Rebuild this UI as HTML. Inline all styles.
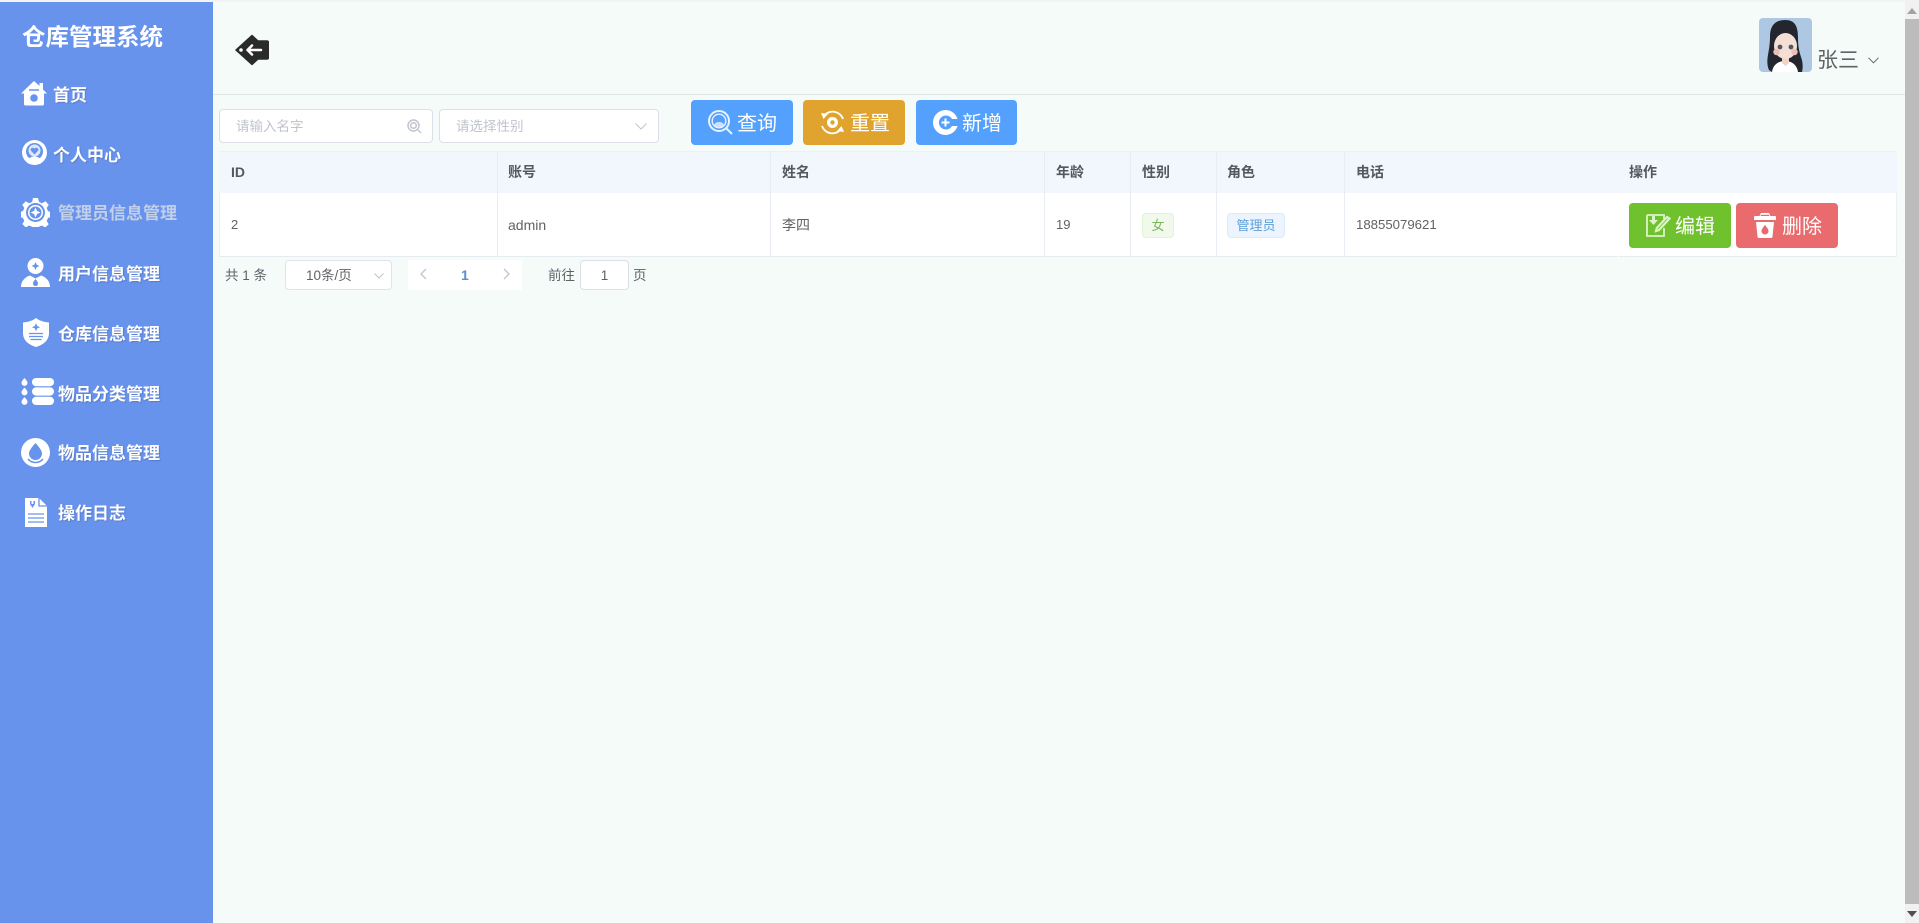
<!DOCTYPE html>
<html lang="zh">
<head>
<meta charset="utf-8">
<title>仓库管理系统</title>
<style>
*{box-sizing:border-box;margin:0;padding:0}
html,body{width:1919px;height:923px;overflow:hidden;background:#f5fbf9}
body{position:relative;font-family:"Liberation Sans","Noto Sans CJK SC",sans-serif;color:#606266}
.a{position:absolute;white-space:nowrap}
.side{left:0;top:2px;width:213px;height:921px;background:#6893ec}
.m{color:#fff;font-weight:700;font-size:17px;line-height:24px;text-shadow:1px 1px 1px rgba(60,80,140,.35)}
.ic{position:absolute;display:block}
.box{background:#fff;border:1px solid #dcdfe6;border-radius:4px}
.btn{border-radius:4px;color:#fff;font-size:20px;line-height:49px;height:45px}
.th{font-size:14px;font-weight:700;color:#55585c;line-height:20px;top:162px}
.td{font-size:14px;color:#606266;line-height:20px;top:215px}
.n{font-size:13px}
.vl{width:1px;background:#e8edf3}
</style>
</head>
<body>
<div class="a" style="left:0;top:0;width:1919px;height:2px;background:#f2f4f4"></div>
<div class="a side"></div>
<div class="a" style="left:22px;top:19px;color:#fff;font-size:23.5px;font-weight:700;line-height:36px">仓库管理系统</div>

<svg class="ic" style="left:21px;top:81px" width="26" height="25" viewBox="0 0 26 25"><path fill="#fff" d="M13 0 0 12.500h3V23a1.500 1.500 0 0 0 1.500 1.500h17A1.500 1.500 0 0 0 23 23V12.500h3L22 8.500V2h-3.500v3z"/><circle cx="13" cy="17" r="3.800" fill="#6893ec"/><path d="M8 9h10" stroke="#6893ec" stroke-width="1.500"/></svg>
<div class="a m" style="left:53px;top:84px">首页</div>

<svg class="ic" style="left:22px;top:140px" width="25" height="25" viewBox="0 0 25 25"><circle cx="12.500" cy="12.500" r="12.500" fill="#fff"/><circle cx="12.500" cy="11.500" r="8.500" fill="#6893ec"/><ellipse cx="12.500" cy="10.500" rx="6" ry="6" fill="#dfe8fb"/><path fill="#6893ec" d="M12.500 14.500 8.700 10.500c-.9-2.300 2.500-3.800 3.800-1.800 1.300-2 4.700-.5 3.800 1.800z"/><path fill="#fff" d="M4 21c3-3.500 6-4.500 8.500-4.500s5.500 1 8.500 4.500l-3 3H7z"/></svg>
<div class="a m" style="left:53px;top:144px">个人中心</div>

<svg class="ic" style="left:21px;top:198px" width="29" height="29" viewBox="0 0 29 29"><path fill="#fff" d="M12 0h5l1 4 3 1.300 3.500-2 3.200 3.500-2 3.300 1.300 3 3 .9v5l-3 1-1.300 3 2 3.300-3.500 3.200-3.300-2-3 1.300-.9 3h-5l-.9-3-3-1.300-3.300 2-3.500-3.500 2-3-1.300-3-3-1v-5l3-1 1.300-3-2-3.200 3.500-3.500 3.300 2 3-1.300z"/><circle cx="14.500" cy="14.500" r="9.500" fill="#6893ec"/><circle cx="14.500" cy="14.500" r="7.500" fill="#fff"/><circle cx="14.500" cy="14.500" r="6" fill="#6893ec"/><path fill="#fff" d="m14.500 9.500 1.500 3.500 3.500 1.500-3.500 1.500-1.500 3.500-1.500-3.500-3.500-1.500 3.500-1.500z"/></svg>
<div class="a m" style="left:58px;top:202px;color:#c3cfe8;text-shadow:none">管理员信息管理</div>

<svg class="ic" style="left:21px;top:258px" width="29" height="29" viewBox="0 0 29 29"><circle cx="14.500" cy="8" r="8" fill="#fff"/><path fill="#6893ec" d="m14.500 4 1.200 2.800 2.800 1.200-2.800 1.200-1.200 2.800-1.200-2.800L10.500 8l2.800-1.200z"/><path fill="#fff" d="M0 29c0-6 4-10 9-11.500l5.500 3 5.500-3c5 1.500 9 5.500 9 11.500z"/><path fill="#6893ec" d="M14.500 21c2 2.300 2.500 3.500 2.500 4.600a2.500 2.500 0 0 1-5 0c0-1.100.5-2.300 2.500-4.600z"/></svg>
<div class="a m" style="left:58px;top:263px">用户信息管理</div>

<svg class="ic" style="left:23px;top:318px" width="26" height="29" viewBox="0 0 26 29"><path fill="#fff" d="M13 0c3 2.500 7.500 4 13 4.500V15c0 7-5 11.500-13 14C5 26.500 0 22 0 15V4.500C5.500 4 10 2.500 13 0z"/><path fill="#6893ec" d="m13 5 1.200 3 3 1.200-3 1.200-1.200 3-1.200-3-3-1.200 3-1.200z"/><path stroke="#6893ec" stroke-width="1.300" d="M6 15.500h14M6 18.500h14M7.500 21.500h11"/></svg>
<div class="a m" style="left:58px;top:323px">仓库信息管理</div>

<svg class="ic" style="left:21px;top:378px" width="33" height="27" viewBox="0 0 33 27"><rect x="11" y="0" width="22" height="8.200" rx="4" fill="#fff"/><rect x="11" y="9.400" width="22" height="8.200" rx="4" fill="#fff"/><rect x="11" y="18.800" width="22" height="8.200" rx="4" fill="#fff"/><path fill="#fff" d="M3.500 0C5.500 2.300 6.500 3.600 6.500 4.900a3 3 0 0 1-6 0C.5 3.600 1.500 2.300 3.500 0zM3.500 9.500c2 2.300 3 3.600 3 4.900a3 3 0 0 1-6 0c0-1.300 1-2.600 3-4.900zM3.500 19c2 2.300 3 3.600 3 4.900a3 3 0 0 1-6 0c0-1.300 1-2.600 3-4.900z"/></svg>
<div class="a m" style="left:58px;top:383px">物品分类管理</div>

<svg class="ic" style="left:21px;top:438px" width="29" height="29" viewBox="0 0 29 29"><circle cx="14.500" cy="14.500" r="14.500" fill="#fff"/><path fill="#6893ec" d="M14.500 5c4.500 5 6.500 8 6.500 10.500a6.500 6.500 0 0 1-13 0C8 13 10 10 14.500 5z"/><path fill="none" stroke="#6893ec" stroke-width="1.500" d="M7 21c2 2.500 4.500 3.500 7.500 3.500S20 23.500 22 21"/></svg>
<div class="a m" style="left:58px;top:442px">物品信息管理</div>

<svg class="ic" style="left:25px;top:498px" width="22" height="29" viewBox="0 0 22 29"><path fill="#fff" d="M0 0h14l8 8v21H0z"/><path stroke="#6893ec" stroke-width="1.300" fill="none" d="M3 16h16M3 20h16M3 24h16M14 0v8h8"/><path fill="#6893ec" d="M5 3h1.500v3h2V3H10v3l-2.500 4L5 6z"/></svg>
<div class="a m" style="left:58px;top:502px">操作日志</div>

<!-- header -->
<div class="a" style="left:213px;top:94px;width:1692px;height:1px;background:#dfe7e7"></div>
<svg class="ic" style="left:235px;top:34px" width="34" height="32" viewBox="0 0 34 32"><path fill="#2b2a2a" stroke="#2b2a2a" stroke-width="1.500" stroke-linejoin="round" d="M17 1.500 23 7h9a1.500 1.500 0 0 1 1.500 1.500v15A1.500 1.500 0 0 1 32 25h-9l-6 5.500L1 16z"/><circle cx="6" cy="16" r="1.800" fill="#fff"/><path fill="none" stroke="#fff" stroke-width="2.500" stroke-linecap="round" stroke-linejoin="round" d="M17 11.500 12.500 16l4.500 4.500M13 16h13"/></svg>

<svg class="ic" style="left:1759px;top:18px;border-radius:4px" width="53" height="54" viewBox="0 0 53 54"><rect width="53" height="54" fill="#aec7e2"/><path fill="#23262f" d="M26 2C16 2 11 8 11 18c0 8-1 13-2 19-1 5-1 11 1 15l3 2h4l20-2 2 2h4c1-4 1-10-1-15-2-6-3-11-3-19C39 8 36 2 26 2z"/><path fill="#fff" d="M13 54c1-7 6-11 13-11s12 4 13 11z"/><path fill="#f1d3c6" d="M23 38h7v7l-3.500 3-3.500-3z"/><ellipse cx="26.500" cy="28" rx="11.500" ry="13" fill="#f3dfd6"/><path fill="#23262f" d="M26 10c-3 5-7 8-12 11 0-8 4-14 12-14s12 6 13 14c-5-3-10-6-13-11z"/><circle cx="21" cy="29" r="2.400" fill="#55565c"/><circle cx="32" cy="29" r="2.400" fill="#55565c"/><circle cx="17.500" cy="34" r="3.200" fill="#ecc0b6"/><circle cx="35.500" cy="34" r="3.200" fill="#ecc0b6"/></svg>
<div class="a" style="left:1817px;top:46px;font-size:21px;line-height:30px;color:#606266">张三</div>
<svg class="ic" style="left:1868px;top:57px" width="11" height="7" viewBox="0 0 11 7"><path fill="none" stroke="#606266" d="m.5.800 5 5 5-5"/></svg>

<!-- scrollbar -->
<div class="a" style="left:1905px;top:0;width:14px;height:923px;background:#f1f1f1"></div>
<div class="a" style="left:1905px;top:19px;width:14px;height:885px;background:#bcbcbc"></div>
<svg class="ic" style="left:1907px;top:8px" width="10" height="6" viewBox="0 0 10 6"><path fill="#a3a3a3" d="M5 0l5 6H0z"/></svg>
<svg class="ic" style="left:1907px;top:911px" width="10" height="6" viewBox="0 0 10 6"><path fill="#505050" d="M0 0h10L5 6z"/></svg>

<!-- filters -->
<div class="a box" style="left:219px;top:109px;width:214px;height:34px"></div>
<div class="a" style="left:236px;top:117px;font-size:13.500px;line-height:20px;color:#c0c4cc">请输入名字</div>
<svg class="ic" style="left:407px;top:119px" width="15" height="15" viewBox="0 0 15 15"><circle cx="6.500" cy="6.500" r="5.500" fill="none" stroke="#c0c4cc" stroke-width="1.500"/><circle cx="6.500" cy="6.500" r="2.800" fill="none" stroke="#c0c4cc" stroke-width="1.500"/><path d="m11 11 3 3" stroke="#c0c4cc" stroke-width="1.300"/></svg>
<div class="a box" style="left:439px;top:109px;width:220px;height:34px"></div>
<div class="a" style="left:456px;top:117px;font-size:13.500px;line-height:20px;color:#c0c4cc">请选择性别</div>
<svg class="ic" style="left:635px;top:123px" width="12" height="7" viewBox="0 0 12 7"><path fill="none" stroke="#c0c4cc" d="m.5.500 5.500 5.500L11.500.500"/></svg>

<!-- buttons -->
<div class="a btn" style="left:691px;top:100px;width:102px;background:#53a0fd;padding-left:46px">查询</div>
<svg class="ic" style="left:708px;top:110px" width="25" height="25" viewBox="0 0 25 25"><circle cx="11" cy="11" r="10" fill="none" stroke="#e8f2ff" stroke-width="2"/><circle cx="11" cy="11" r="6.800" fill="none" stroke="#e8f2ff" stroke-width="1.400"/><path fill="#e8f2ff" d="M6 15c1-2.500 3-3 5-3s4 .5 5 3l-2.500 2h-5z" opacity=".8"/><path d="m18 18 6 6" stroke="#e8f2ff" stroke-width="2"/></svg>
<div class="a btn" style="left:803px;top:100px;width:102px;background:#e0a42e;padding-left:47px">重置</div>
<svg class="ic" style="left:820px;top:110px" width="25" height="25" viewBox="0 0 25 25"><path fill="none" stroke="#fff" stroke-width="1.800" d="M3.500 6.500A11 11 0 0 1 23 9M21.500 18.500A11 11 0 0 1 2 16"/><circle cx="12.500" cy="12.500" r="5.500" fill="#fff"/><circle cx="12.500" cy="12.500" r="2.200" fill="#e0a42e"/><path fill="#fff" d="m1 3 7 1-4.500 5zM24 22l-7-1 4.500-5z"/></svg>
<div class="a btn" style="left:916px;top:100px;width:101px;background:#53a0fd;padding-left:46px">新增</div>
<svg class="ic" style="left:933px;top:110px" width="25" height="25" viewBox="0 0 25 25"><path fill="#fff" d="M12.500 0a12.500 12.500 0 0 1 12 9h-5.500a7 7 0 1 0 0 7h5.500a12.500 12.500 0 1 1-12-16z"/><path stroke="#fff" stroke-width="2" d="M12.500 8.500v8M8.500 12.500h8"/></svg>

<!-- table -->
<div class="a" style="left:219px;top:151px;width:1678px;height:42px;background:#f1f7fd;border-top:1px solid #edf1f5"></div>
<div class="a" style="left:219px;top:193px;width:1678px;height:64px;background:#fff;border-bottom:1px solid #e6ebf0;border-left:1px solid #edf0f3;border-right:1px solid #edf0f3"></div>
<div class="a vl" style="left:497px;top:151px;height:106px"></div>
<div class="a vl" style="left:770px;top:151px;height:106px"></div>
<div class="a vl" style="left:1044px;top:151px;height:106px"></div>
<div class="a vl" style="left:1130px;top:151px;height:106px"></div>
<div class="a vl" style="left:1216px;top:151px;height:106px"></div>
<div class="a vl" style="left:1344px;top:151px;height:106px"></div>
<div class="a vl" style="left:1618px;top:193px;height:64px;background:#fff"></div>

<div class="a th" style="left:231px">ID</div>
<div class="a th" style="left:508px">账号</div>
<div class="a th" style="left:782px">姓名</div>
<div class="a th" style="left:1056px">年龄</div>
<div class="a th" style="left:1142px">性别</div>
<div class="a th" style="left:1227px">角色</div>
<div class="a th" style="left:1356px">电话</div>
<div class="a th" style="left:1629px">操作</div>

<div class="a td n" style="left:231px">2</div>
<div class="a td" style="left:508px">admin</div>
<div class="a td" style="left:782px">李四</div>
<div class="a td n" style="left:1056px">19</div>
<div class="a" style="left:1142px;top:213px;width:32px;height:25px;background:#f0f9eb;border:1px solid #e1f3d8;border-radius:4px;color:#7fb85a;font-size:13px;line-height:24px;text-align:center">女</div>
<div class="a" style="left:1227px;top:213px;width:58px;height:25px;background:#ecf5ff;border:1px solid #d9ecff;border-radius:4px;color:#5a9fd8;font-size:13px;line-height:24px;text-align:center">管理员</div>
<div class="a td n" style="left:1356px;font-size:13.2px">18855079621</div>

<div class="a btn" style="left:1629px;top:203px;width:102px;background:#6fc12e;padding-left:46px">编辑</div>
<svg class="ic" style="left:1646px;top:213px" width="25" height="25" viewBox="0 0 25 25"><path fill="none" stroke="#ddf5c6" stroke-width="1.800" d="M1 2h17v4M18 15v8H1V2"/><path fill="#ddf5c6" d="M6 3h3v4h3l-4.500 5L3 7h3z"/><path fill="none" stroke="#ddf5c6" stroke-width="2.200" d="M23.500 5.500 13 17l-3 1 .8-3L21 4z"/></svg>
<div class="a btn" style="left:1736px;top:203px;width:102px;background:#e96b6d;padding-left:46px">删除</div>
<svg class="ic" style="left:1754px;top:213px" width="22" height="25" viewBox="0 0 22 25"><path fill="#fff" d="M7 0h8l1.500 3H21a1 1 0 0 1 1 1v3H0V4a1 1 0 0 1 1-1h4.500zM2 9h18l-1.500 14.500a1.600 1.600 0 0 1-1.600 1.500H5.100a1.600 1.600 0 0 1-1.600-1.500z"/><path fill="#e96b6d" d="M11 12c2.500 3 3.500 4.500 3.500 6a3.500 3.500 0 0 1-7 0c0-1.500 1-3 3.500-6zM7 1.800h8l.6 1.200H6.400z"/></svg>

<!-- pagination -->
<div class="a" style="left:225px;top:266px;font-size:13.500px;line-height:20px">共 1 条</div>
<div class="a box" style="left:285px;top:260px;width:107px;height:30px;border-color:#e0e3e8"></div>
<div class="a" style="left:306px;top:266px;font-size:13.500px;line-height:20px">10条/页</div>
<svg class="ic" style="left:374px;top:273px" width="10" height="6" viewBox="0 0 10 6"><path fill="none" stroke="#c0c4cc" d="m.5.500 4.500 4.500L9.500.500"/></svg>
<div class="a" style="left:408px;top:260px;width:114px;height:30px;background:#fff"></div>
<svg class="ic" style="left:420px;top:268px" width="7" height="12" viewBox="0 0 7 12"><path fill="none" stroke="#c0c4cc" stroke-width="1.300" d="M6 1 1 6l5 5"/></svg>
<div class="a" style="left:461px;top:265px;font-size:14px;font-weight:700;line-height:20px;color:#5b8ed0">1</div>
<svg class="ic" style="left:503px;top:268px" width="7" height="12" viewBox="0 0 7 12"><path fill="none" stroke="#c0c4cc" stroke-width="1.300" d="m1 1 5 5-5 5"/></svg>
<div class="a" style="left:548px;top:266px;font-size:13.500px;line-height:20px">前往</div>
<div class="a box" style="left:580px;top:260px;width:49px;height:30px;border-color:#dcdfe6;text-align:center;font-size:13.500px;line-height:29px">1</div>
<div class="a" style="left:633px;top:266px;font-size:13.500px;line-height:20px">页</div>
</body>
</html>
